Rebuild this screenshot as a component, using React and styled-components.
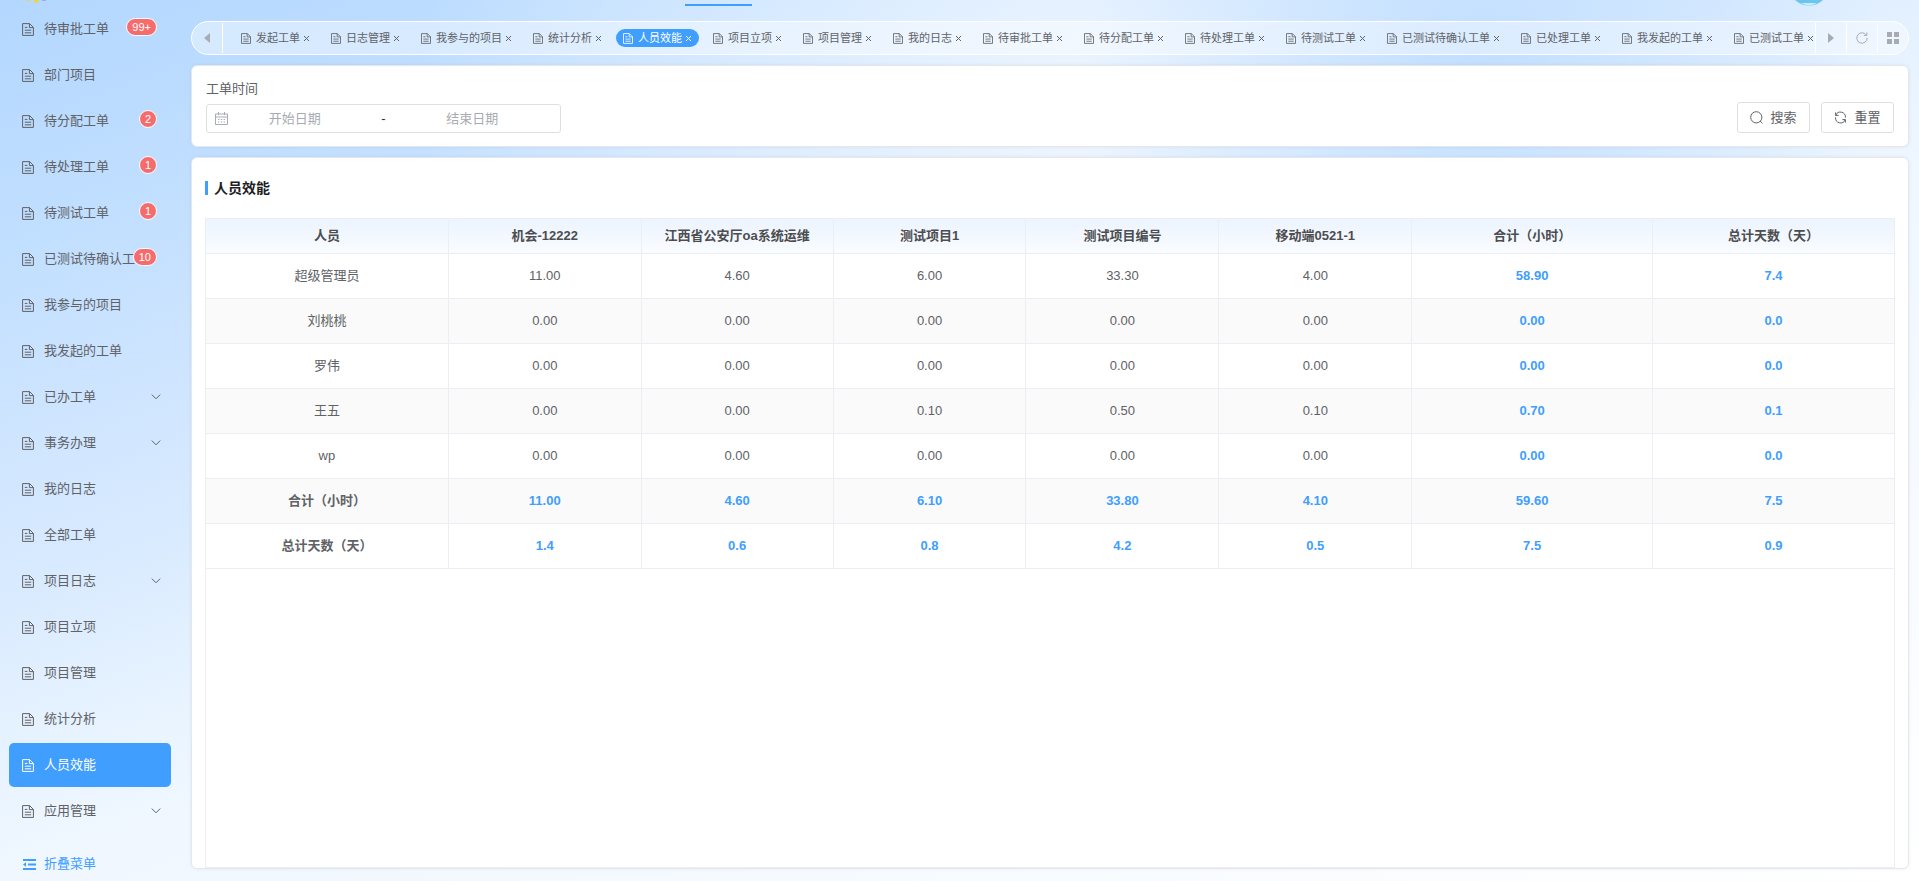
import React, { useState } from 'react';
import styled, { createGlobalStyle } from 'styled-components';

const colors = {
  primary: '#409eff',
  danger: '#f56c6c',
  text: '#606266',
  dark: '#303133',
  placeholder: '#a8abb2',
  border: '#dcdfe6',
  line: '#ebeef5',
  white: '#ffffff',
};

const GlobalStyle = createGlobalStyle`
  * {
    box-sizing: border-box;
  }

  body {
    margin: 0;
    color: ${colors.text};
    font-family: "Liberation Sans", "Noto Sans CJK SC", sans-serif;
    font-size: 13px;
    line-height: 20px;
  }

  button, input {
    font: inherit;
  }
`;

const Page = styled.div`
  position: relative;
  display: flex;
  height: 100vh;
  overflow: hidden;
  background:
    radial-gradient(ellipse 400px 380px at 77% 8%, rgba(190, 221, 255, .9), rgba(190, 221, 255, 0)),
    radial-gradient(ellipse 680px 480px at 57% 12%, rgba(244, 249, 255, .8), rgba(244, 249, 255, 0)),
    linear-gradient(160deg, #b3d7ff 0%, #c3e0ff 18%, #cfe5ff 28%, #d8eaff 37%, #ebf5ff 51%, #f0f7ff 56%, #fff 100%);
`;

const Sidebar = styled.nav`
  flex: 0 0 180px;
  display: flex;
  flex-direction: column;
  padding: 7px 9px 0;
`;

const Menu = styled.ul`
  display: flex;
  flex-direction: column;
  gap: 2px;
  margin: 0;
  padding: 0;
  list-style: none;
`;

const MenuItem = styled.li`
  position: relative;
  width: 162px;
`;

const MenuLink = styled.a`
  display: flex;
  align-items: center;
  gap: 10px;
  height: 44px;
  padding: 0 10px 0 13px;
  border-radius: 5px;
  color: ${props => props.$active ? colors.white : colors.text};
  background: ${props => props.$active ? colors.primary : 'transparent'};
  text-decoration: none;
`;

const MenuText = styled.span`
  flex: 1;
  max-width: 104px;
  overflow: hidden;
  text-overflow: ellipsis;
  white-space: nowrap;
`;

const Badge = styled.sup`
  position: absolute;
  top: 11px;
  right: 14px;
  height: 18px;
  min-width: 18px;
  padding: 0 5px;
  border: 1px solid ${colors.white};
  border-radius: 9px;
  color: ${colors.white};
  background: ${colors.danger};
  font-size: 11px;
  line-height: 16px;
  text-align: center;
`;

const Arrow = styled.svg`
  margin-left: auto;
`;

const Collapse = styled.button`
  display: flex;
  align-items: center;
  gap: 8px;
  margin-top: 21px;
  padding: 0 0 0 14px;
  border: 0;
  background: none;
  color: ${colors.primary};
`;

const Main = styled.main`
  flex: 1;
  min-width: 0;
  display: flex;
  flex-direction: column;
  gap: 10px;
  padding: 21px 10px 12px 11px;
`;

const NavLine = styled.div`
  position: absolute;
  top: 4px;
  left: 685px;
  width: 67px;
  height: 2px;
  background: ${colors.primary};
`;

const Avatar = styled.svg`
  position: absolute;
  top: 0;
  right: 96px;
`;

const Logo = styled.svg`
  position: absolute;
  top: 0;
  left: 24px;
`;

const TabBar = styled.div`
  display: flex;
  height: 34px;
  border: 1px solid ${colors.white};
  border-radius: 17px;
  background: rgba(255, 255, 255, .4);
  overflow: hidden;
`;

const TabTool = styled.button`
  flex: none;
  display: flex;
  align-items: center;
  justify-content: center;
  width: 31px;
  margin: 1px 0;
  padding: 0;
  border: 0;
  border-${props => props.$side}: 1px solid ${colors.white};
  color: ${colors.placeholder};
  background: none;
`;

const Tabs = styled.div`
  flex: 1;
  min-width: 0;
  display: flex;
  align-items: center;
  gap: 7px;
  padding-left: 11px;
  overflow: hidden;
`;

const Tab = styled.div`
  flex: none;
  display: flex;
  align-items: center;
  height: 18px;
  padding: 0 7px;
  border-radius: 9px;
  color: ${props => props.$active ? colors.white : colors.text};
  background: ${props => props.$active ? colors.primary : 'transparent'};
  font-size: 11px;
  line-height: 18px;
`;

const TabLink = styled.a`
  display: flex;
  align-items: center;
  gap: 5px;
  color: inherit;
  text-decoration: none;
  white-space: nowrap;
`;

const TabClose = styled.button`
  display: flex;
  margin-left: 3px;
  padding: 0;
  border: 0;
  color: inherit;
  background: none;
`;

const Card = styled.section`
  border: 1px solid #e4e7ed;
  border-radius: 6px;
  background: ${colors.white};
  box-shadow: 0 0 4px rgba(0, 0, 0, .06);
`;

const SearchCard = styled(Card)`
  display: flex;
  align-items: flex-end;
  justify-content: space-between;
  height: 82px;
  padding: 0 14px 13px;
`;

const Field = styled.fieldset`
  margin: 0;
  padding: 0;
  border: 0;
`;

const FieldLabel = styled.legend`
  padding: 0;
  margin-bottom: 5px;
`;

const DateRange = styled.div`
  display: flex;
  align-items: center;
  width: 355px;
  height: 29px;
  padding: 0 21px 0 8px;
  border: 1px solid ${colors.border};
  border-radius: 3px;
  color: ${colors.placeholder};
`;

const DateInput = styled.input`
  flex: 1;
  min-width: 0;
  height: 26px;
  padding: 0;
  border: 0;
  outline: 0;
  color: ${colors.text};
  background: none;
  text-align: center;

  &::placeholder {
    color: ${colors.placeholder};
    opacity: 1;
  }
`;

const Separator = styled.span`
  flex: 0 0 44px;
  color: ${colors.dark};
  text-align: center;
`;

const Actions = styled.div`
  display: flex;
  gap: 11px;
`;

const Button = styled.button`
  display: flex;
  align-items: center;
  justify-content: center;
  gap: 7px;
  width: 73px;
  height: 31px;
  padding: 0;
  border: 1px solid ${colors.border};
  border-radius: 3px;
  color: ${colors.text};
  background: ${colors.white};
`;

const TableCard = styled(Card)`
  flex: 1;
  min-height: 0;
  display: flex;
  flex-direction: column;
  padding: 0 13px;
`;

const Title = styled.h1`
  display: flex;
  align-items: center;
  gap: 6px;
  height: 60px;
  margin: 0;
  color: #1d1e1f;
  font-size: 14px;
  font-weight: 700;

  &::before {
    content: '';
    width: 3px;
    height: 14px;
    background: ${colors.primary};
  }
`;

const TableFrame = styled.div`
  flex: 1;
  min-height: 0;
  border: 1px solid ${colors.line};
`;

const Table = styled.table`
  width: 100%;
  border-spacing: 0;
  table-layout: fixed;
`;

const HeadRow = styled.tr`
  background: linear-gradient(#ecf4ff, #fafcff);
`;

const Row = styled.tr`
  background: ${props => props.$striped ? '#fafafa' : colors.white};
`;

const Cell = styled.td`
  height: 45px;
  padding: 0;
  border-bottom: 1px solid ${colors.line};
  border-right: 1px solid ${colors.line};
  color: ${props => props.$sum ? colors.primary : colors.text};
  font-weight: ${props => props.$sum || props.$bold ? 700 : 400};
  text-align: center;

  &:last-child {
    border-right: 0;
  }
`;

const HeadCell = styled(Cell)`
  height: 35px;
  color: #4c4d4f;
  font-weight: 700;
`;

const menu = [
  {label: '待审批工单', badge: '99+'},
  {label: '部门项目'},
  {label: '待分配工单', badge: '2'},
  {label: '待处理工单', badge: '1'},
  {label: '待测试工单', badge: '1'},
  {label: '已测试待确认工单', badge: '10'},
  {label: '我参与的项目'},
  {label: '我发起的工单'},
  {label: '已办工单', children: true},
  {label: '事务办理', children: true},
  {label: '我的日志'},
  {label: '全部工单'},
  {label: '项目日志', children: true},
  {label: '项目立项'},
  {label: '项目管理'},
  {label: '统计分析'},
  {label: '人员效能'},
  {label: '应用管理', children: true},
];

const tabs = [
  '发起工单', '日志管理', '我参与的项目', '统计分析', '人员效能', '项目立项', '项目管理', '我的日志',
  '待审批工单', '待分配工单', '待处理工单', '待测试工单', '已测试待确认工单', '已处理工单', '我发起的工单', '已测试工单',
];

const heads = ['人员', '机会-12222', '江西省公安厅oa系统运维', '测试项目1', '测试项目编号', '移动端0521-1', '合计（小时）', '总计天数（天）'];
const widths = [243, 193, 192, 193, 193, 193, 241, 241];

const rows = [
  ['超级管理员', '11.00', '4.60', '6.00', '33.30', '4.00', '58.90', '7.4'],
  ['刘桃桃', '0.00', '0.00', '0.00', '0.00', '0.00', '0.00', '0.0'],
  ['罗伟', '0.00', '0.00', '0.00', '0.00', '0.00', '0.00', '0.0'],
  ['王五', '0.00', '0.00', '0.10', '0.50', '0.10', '0.70', '0.1'],
  ['wp', '0.00', '0.00', '0.00', '0.00', '0.00', '0.00', '0.0'],
  ['合计（小时）', '11.00', '4.60', '6.10', '33.80', '4.10', '59.60', '7.5'],
  ['总计天数（天）', '1.4', '0.6', '0.8', '4.2', '0.5', '7.5', '0.9'],
];

const DocIcon = ({size = 12}) => (
  <svg width={size} height={size + 1} viewBox="0 0 12 13" fill="none" stroke="currentColor" aria-hidden="true">
    <path d="M.6.6h7l3.8 3.8v8H.6z M7.4.6v4h4 M2.8 4.4h2.6 M2.8 7.2h6.4 M2.8 9.8h6.4" />
  </svg>
);

const CloseIcon = () => (
  <svg width="7" height="7" viewBox="0 0 7 7" stroke="currentColor" aria-hidden="true">
    <path d="M1 1l5 5M6 1L1 6" />
  </svg>
);

const CalendarIcon = () => (
  <svg width="13" height="13" viewBox="0 0 13 13" fill="none" stroke="currentColor" aria-hidden="true">
    <path d="M.5 2h12v10.5H.5z M.5 5h12 M3.5 0v3 M9.5 0v3" />
    <path d="M3 7.5h1.4 M5.8 7.5h1.4 M8.6 7.5H10 M3 10h1.4 M5.8 10h1.4 M8.6 10H10" />
  </svg>
);

const SearchIcon = () => (
  <svg width="13" height="13" viewBox="0 0 13 13" fill="none" stroke="currentColor" aria-hidden="true">
    <circle cx="6.3" cy="6.3" r="5.6" />
    <path d="M10 10l2.4 2.4" />
  </svg>
);

const ResetIcon = () => (
  <svg width="13" height="13" viewBox="0 0 13 13" fill="none" stroke="currentColor" aria-hidden="true">
    <path d="M1.6 1.4v3h3 M1.8 4.2A5 5 0 0 1 11.4 6.6 M11.4 11.6v-3h-3 M11.2 8.8A5 5 0 0 1 1.6 6.4" />
  </svg>
);

const RefreshIcon = () => (
  <svg width="12" height="12" viewBox="0 0 12 12" fill="none" stroke="currentColor" aria-hidden="true">
    <path d="M10.4 3.2A5.2 5.2 0 1 0 11.2 6 M10.8.4v3H7.8" />
  </svg>
);

const GridIcon = () => (
  <svg width="12" height="12" viewBox="0 0 12 12" fill="currentColor" aria-hidden="true">
    <path d="M0 0h5v5H0z M7 0h5v5H7z M0 7h5v5H0z M7 7h5v5H7z" />
  </svg>
);

const CollapseIcon = () => (
  <svg width="13" height="11" viewBox="0 0 13 11" fill="currentColor" aria-hidden="true">
    <path d="M0 0h13v2H0z M5 4.5h8v2H5z M0 9h13v2H0z M0 5.5l3-2.2v4.4z" />
  </svg>
);

const App = () => {
  const [current, setCurrent] = useState('人员效能');

  return (
    <Page>
      <GlobalStyle />
      <Sidebar>
        <Menu>
          {menu.map(item => (
            <MenuItem key={item.label}>
              <MenuLink href="#" $active={item.label === current} onClick={() => setCurrent(item.label)}>
                <DocIcon />
                <MenuText>{item.label}</MenuText>
                {item.children && (
                  <Arrow width="10" height="6" viewBox="0 0 10 6" fill="none" stroke="currentColor">
                    <path d="M.8.6L5 4.8 9.2.6" />
                  </Arrow>
                )}
              </MenuLink>
              {item.badge && <Badge>{item.badge}</Badge>}
            </MenuItem>
          ))}
        </Menu>
        <Collapse type="button"><CollapseIcon />折叠菜单</Collapse>
      </Sidebar>
      <Main>
        <TabBar>
          <TabTool type="button" aria-label="向左" $side="right">
            <svg width="6" height="10" viewBox="0 0 6 10" fill="currentColor"><path d="M6 0v10L0 5z" /></svg>
          </TabTool>
          <Tabs>
            {tabs.map(tab => (
              <Tab key={tab} $active={tab === current}>
                <TabLink href="#" onClick={() => setCurrent(tab)}><DocIcon size={10} />{tab}</TabLink>
                <TabClose type="button" aria-label="关闭"><CloseIcon /></TabClose>
              </Tab>
            ))}
          </Tabs>
          <TabTool type="button" aria-label="向右" $side="left">
            <svg width="6" height="10" viewBox="0 0 6 10" fill="currentColor"><path d="M0 0v10l6-5z" /></svg>
          </TabTool>
          <TabTool type="button" aria-label="刷新" $side="left"><RefreshIcon /></TabTool>
          <TabTool type="button" aria-label="更多" $side="left"><GridIcon /></TabTool>
        </TabBar>
        <SearchCard>
          <Field>
            <FieldLabel>工单时间</FieldLabel>
            <DateRange>
              <CalendarIcon />
              <DateInput aria-label="开始日期" placeholder="开始日期" />
              <Separator>-</Separator>
              <DateInput aria-label="结束日期" placeholder="结束日期" />
            </DateRange>
          </Field>
          <Actions>
            <Button type="button"><SearchIcon />搜索</Button>
            <Button type="button"><ResetIcon />重置</Button>
          </Actions>
        </SearchCard>
        <TableCard>
          <Title>人员效能</Title>
          <TableFrame>
            <Table>
              <colgroup>
                {widths.map((width, i) => <col key={i} style={{width: `${width / 16.89}%`}} />)}
              </colgroup>
              <thead>
                <HeadRow>
                  {heads.map(head => <HeadCell as="th" key={head}>{head}</HeadCell>)}
                </HeadRow>
              </thead>
              <tbody>
                {rows.map(([name, ...values], i) => (
                  <Row key={name} $striped={i % 2 === 1}>
                    <Cell $bold={i > 4}>{name}</Cell>
                    {values.map((value, j) => <Cell key={j} $sum={i > 4 || j > 4}>{value}</Cell>)}
                  </Row>
                ))}
              </tbody>
            </Table>
          </TableFrame>
        </TableCard>
      </Main>
      <Logo width="24" height="4" viewBox="0 0 24 4">
        <path d="M1 0h6l-2 1z M10 0h5l-3 4z" fill="#f7d51d" />
        <path d="M17 0h6l-3 1z" fill="#8f9cf5" />
      </Logo>
      <NavLine />
      <Avatar width="28" height="7" viewBox="0 0 28 7">
        <path d="M0 0h28Q22 5.6 14 5.6Q6 5.6 0 0z" fill="#6cc5f0" />
        <path d="M6 3h16Q18 5.4 14 5.4Q10 5.4 6 3z" fill="#c4f0fa" />
      </Avatar>
    </Page>
  );
};

export default App;
